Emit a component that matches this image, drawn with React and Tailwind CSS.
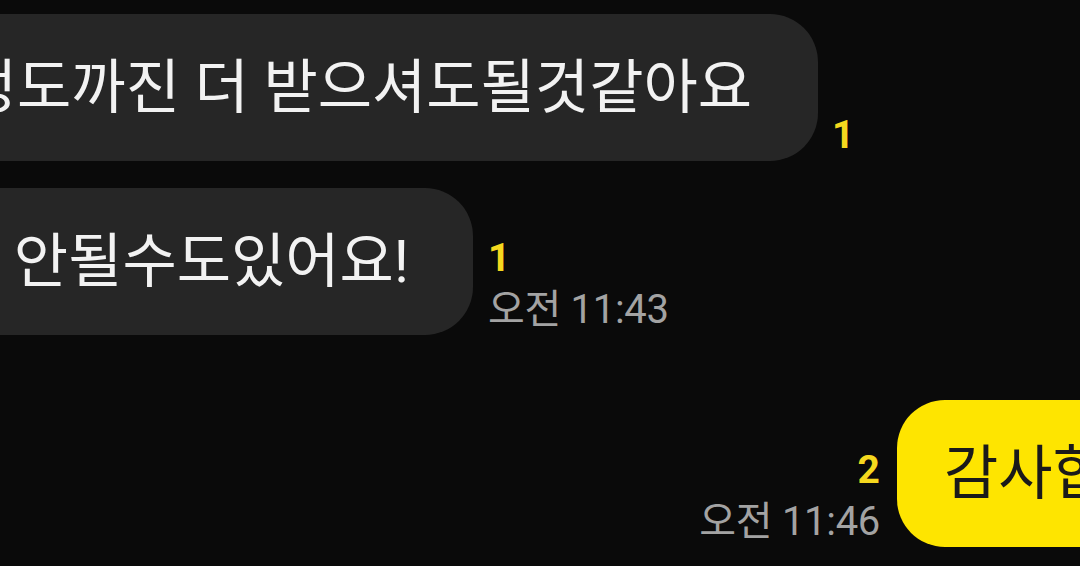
import React from 'react';

const FONT = { fontFamily: '"Roboto", "Noto Sans CJK KR", sans-serif' };

function Meta({ count, time, align = 'left' }) {
  return (
    <div className={`flex flex-col ${time ? 'pb-[1px]' : 'pb-[4px]'} ${align === 'right' ? 'items-end' : 'items-start'}`}>
      <span className="text-[39px] font-bold leading-[44px] text-[#f5d81e]">{count}</span>
      {time && (
        <span className="text-[40px] leading-[48px] text-[#a3a3a3] tracking-[-0.3px] mt-[6px]">{time}</span>
      )}
    </div>
  );
}

export default function App() {
  return (
    <div className="w-[1080px] h-[566px] overflow-hidden bg-[#0a0a0a] flex flex-col" style={FONT}>
      {/* incoming */}
      <div className="flex items-end mt-[14px]">
        <div className="w-[818px] h-[147px] shrink-0 bg-[#262626] rounded-r-[48px] overflow-hidden flex items-center justify-end pr-[66px]">
          <span className="whitespace-nowrap text-[59px] text-[#f2f2f2] leading-none">정도까진 더 받으셔도될것같아요</span>
        </div>
        <div className="ml-[14px]">
          <Meta count="1" />
        </div>
      </div>

      <div className="flex items-end mt-[27px]">
        <div className="w-[473px] h-[147px] shrink-0 bg-[#262626] rounded-r-[48px] overflow-hidden flex items-center justify-end pr-[64px]">
          <span className="whitespace-nowrap text-[59px] text-[#f2f2f2] leading-none">안될수도있어요!</span>
        </div>
        <div className="ml-[15px]">
          <Meta count="1" time="오전 11:43" />
        </div>
      </div>

      {/* outgoing */}
      <div className="flex items-end justify-end mt-[65px]">
        <div className="mr-[17px]">
          <Meta count="2" time="오전 11:46" align="right" />
        </div>
        <div className="w-[183px] h-[147px] shrink-0 bg-[#fee500] rounded-l-[48px] overflow-hidden flex items-center pl-[47px]">
          <span className="whitespace-nowrap text-[59px] text-[#1a1a1a] leading-none">감사합니다</span>
        </div>
      </div>
    </div>
  );
}
